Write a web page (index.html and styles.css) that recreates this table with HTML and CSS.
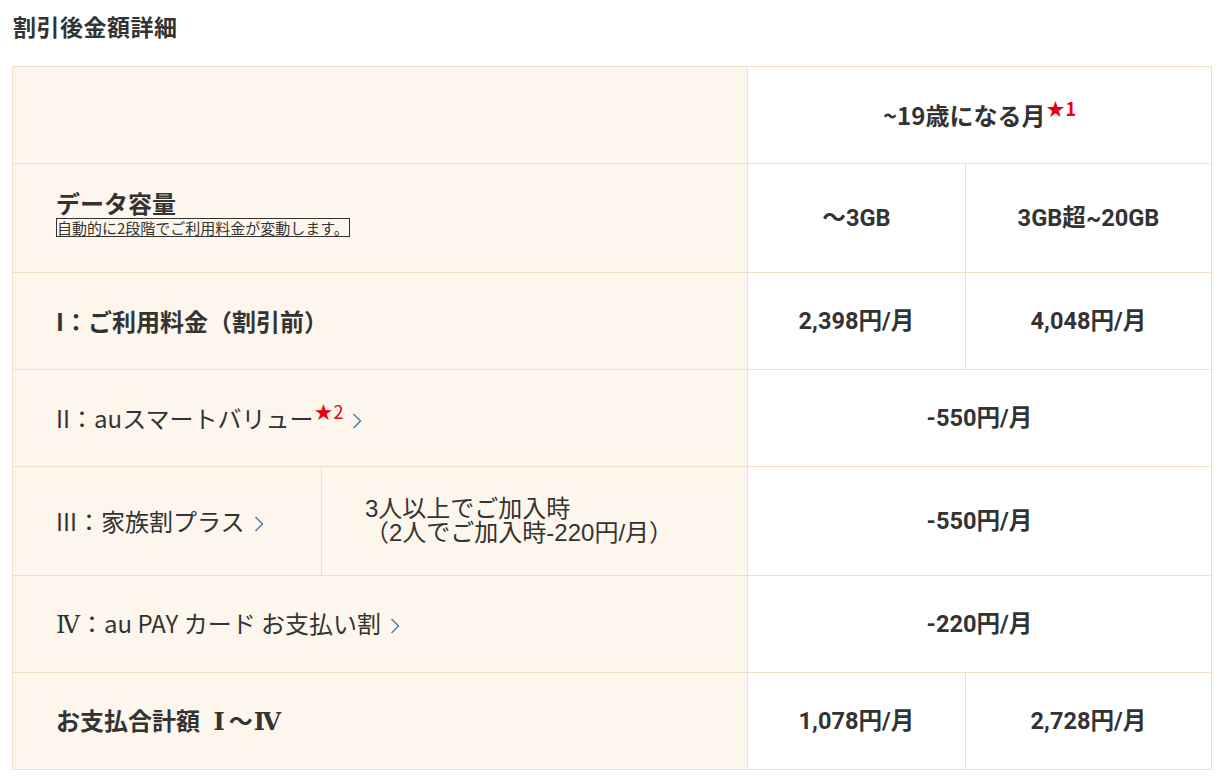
FILE: index.html
```html
<!DOCTYPE html>
<html lang="ja">
<head>
<meta charset="utf-8">
<title>割引後金額詳細</title>
<link rel="stylesheet" href="styles.css">
</head>
<body>
<div class="page">
  <h2 class="title">割引後金額詳細</h2>
  <table class="price">
    <colgroup><col class="c1"><col class="c2"><col class="c3"><col class="c4"></colgroup>
    <tr class="row">
      <th colspan="2" class="lbl"></th>
      <th colspan="2" class="val head">~19歳になる月<sup class="mark"><span class="star">★</span>1</sup></th>
    </tr>
    <tr class="row-tall">
      <th colspan="2" class="lbl bold">
        <div class="lbl-title">データ容量</div>
        <span class="boxnote">自動的に2段階でご利用料金が変動します。</span>
      </th>
      <td class="val">〜3GB</td>
      <td class="val">3GB超~20GB</td>
    </tr>
    <tr class="row">
      <th colspan="2" class="lbl bold">I：ご利用料金（割引前）</th>
      <td class="val">2,398円/月</td>
      <td class="val">4,048円/月</td>
    </tr>
    <tr class="row">
      <th colspan="2" class="lbl">II：auスマートバリュー<sup class="mark reg"><span class="star">★</span>2</sup><svg class="chev" width="10" height="16" viewBox="0 0 10 16"><path d="M1.5 1 L8.5 8 L1.5 15" fill="none" stroke="#4a7aa3" stroke-width="1.4"/></svg></th>
      <td colspan="2" class="val">-550円/月</td>
    </tr>
    <tr class="row-tall">
      <th class="lbl">III：家族割プラス<svg class="chev" width="10" height="16" viewBox="0 0 10 16"><path d="M1.5 1 L8.5 8 L1.5 15" fill="none" stroke="#4a7aa3" stroke-width="1.4"/></svg></th>
      <td class="lbl cond">3人以上でご加入時<br>（2人でご加入時-220円/月）</td>
      <td colspan="2" class="val">-550円/月</td>
    </tr>
    <tr class="row">
      <th colspan="2" class="lbl"><span class="rn">Ⅳ</span>：au PAY カード お支払い割<svg class="chev" width="10" height="16" viewBox="0 0 10 16"><path d="M1.5 1 L8.5 8 L1.5 15" fill="none" stroke="#4a7aa3" stroke-width="1.4"/></svg></th>
      <td colspan="2" class="val">-220円/月</td>
    </tr>
    <tr class="row">
      <th colspan="2" class="lbl bold">お支払合計額 <span class="rn rn-i">Ⅰ</span>～<span class="rn rn-iv">Ⅳ</span></th>
      <td class="val">1,078円/月</td>
      <td class="val">2,728円/月</td>
    </tr>
  </table>
</div>
</body>
</html>
```

FILE: styles.css
```css
* { box-sizing: border-box; }
html, body { margin: 0; padding: 0; background: #fff; }
body {
  font-family: "Noto Sans CJK JP", "Noto Sans", sans-serif;
  color: #333;
}
.page { padding: 10px 12px 0 12px; }
.title {
  margin: 0 0 23px 1px;
  font-size: 23px;
  line-height: 33px;
  font-weight: 700;
  letter-spacing: 0.5px;
}
.price {
  width: 1200px;
  border-collapse: collapse;
  table-layout: fixed;
}
.c1 { width: 309px; }
.c2 { width: 426px; }
.c3 { width: 218px; }
.c4 { width: 246px; }
.row { height: 97px; }
.row-tall { height: 109px; }
.price th, .price td {
  border: 1px solid #f1dec7;
  padding: 0 0 0 43px;
  vertical-align: middle;
  text-align: left;
  font-weight: 400;
  font-size: 24px;
  line-height: 30px;
  white-space: nowrap;
}
.price .lbl { background: #fdf6ec; }
.price .bold { font-weight: 700; }
.lbl-title { line-height: 30px; }
.boxnote {
  display: inline-block;
  font-size: 15px;
  line-height: 17px;
  font-weight: 400;
  border: 1px solid #333;
  vertical-align: top;
}
.price .cond {
  font-family: "Liberation Sans", "Noto Sans CJK JP", sans-serif;
  line-height: 24px;
}
.price .val {
  background: #fff;
  text-align: center;
  padding: 0;
  font-family: Roboto, "Noto Sans CJK JP", sans-serif;
  font-weight: 700;
  font-size: 23.6px;
}
.price .head {
  font-family: "Noto Sans CJK JP", sans-serif;
  font-size: 24px;
}
.mark {
  color: #e60012;
  font-size: 18px;
  line-height: 0;
  vertical-align: 9px;
  margin-left: 1px;
}
.mark.reg { font-weight: 400; }
.star { margin-right: 1px; }
.chev {
  margin-left: 9px;
  vertical-align: -1px;
}
.rn {
  font-family: "DejaVu Serif", "Liberation Serif", serif;
}
.rn-i { margin: 0 4px 0 8px; }
.rn-iv { margin-left: 1px; letter-spacing: 2px; }
```
